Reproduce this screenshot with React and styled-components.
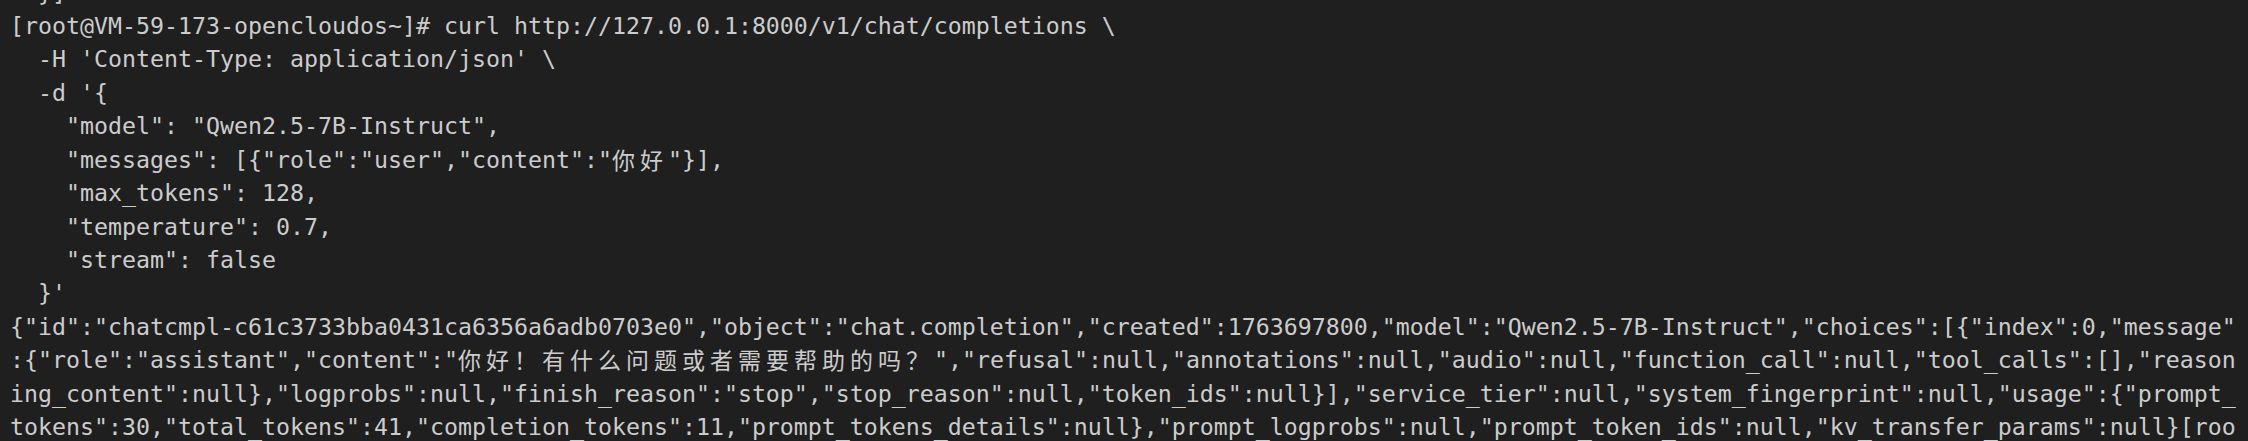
import React from "react";
import styled, { createGlobalStyle } from "styled-components";

const Global = createGlobalStyle`
  html, body {
    margin: 0;
    padding: 0;
    background: #1f1f1f;
    overflow: hidden;
  }
  #root {
    width: 2248px;
    height: 441px;
    overflow: hidden;
  }
`;

const Screen = styled.div`
  width: 2248px;
  height: 441px;
  overflow: hidden;
  background: #1f1f1f;
`;

const Terminal = styled.div`
  margin-top: -24.5px;
  padding-left: 10px;
  font-family: "DejaVu Sans Mono", "Liberation Mono", "Noto Sans CJK SC", monospace;
  font-size: 23.25px;
  line-height: 33.45px;
  color: #cccccc;
  display: flex;
  flex-direction: column;
`;

const Row = styled.div`
  height: 33.45px;
  white-space: pre;
  display: flex;
  align-items: center;
`;

const Wide = styled.span`
  display: inline-block;
  width: 28px;
  text-align: left;
  font-family: "Noto Sans CJK SC", sans-serif;
  font-size: 23px;
`;

const Cursor = styled.span`
  display: inline-block;
  width: 14px;
  height: 33.45px;
  background: #cccccc;
`;

const lines = [
  "  }]",
  "[root@VM-59-173-opencloudos~]# curl http://127.0.0.1:8000/v1/chat/completions \\",
  "  -H 'Content-Type: application/json' \\",
  "  -d '{",
  '    "model": "Qwen2.5-7B-Instruct",',
  '    "messages": [{"role":"user","content":"你好"}],',
  '    "max_tokens": 128,',
  '    "temperature": 0.7,',
  '    "stream": false',
  "  }'",
  '{"id":"chatcmpl-c61c3733bba0431ca6356a6adb0703e0","object":"chat.completion","created":1763697800,"model":"Qwen2.5-7B-Instruct","choices":[{"index":0,"message"',
  ':{"role":"assistant","content":"你好！有什么问题或者需要帮助的吗？","refusal":null,"annotations":null,"audio":null,"function_call":null,"tool_calls":[],"reason',
  'ing_content":null},"logprobs":null,"finish_reason":"stop","stop_reason":null,"token_ids":null}],"service_tier":null,"system_fingerprint":null,"usage":{"prompt_',
  'tokens":30,"total_tokens":41,"completion_tokens":11,"prompt_tokens_details":null},"prompt_logprobs":null,"prompt_token_ids":null,"kv_transfer_params":null}[roo',
];

const isWide = (ch) => /[\u3000-\u9fff\uff00-\uffef]/.test(ch);

function renderLine(text) {
  const parts = [];
  let buf = "";
  Array.from(text).forEach((ch, i) => {
    if (isWide(ch)) {
      if (buf) {
        parts.push(buf);
        buf = "";
      }
      parts.push(<Wide key={i}>{ch}</Wide>);
    } else {
      buf += ch;
    }
  });
  if (buf) parts.push(buf);
  return parts;
}

export default function App() {
  return (
    <Screen>
      <Global />
      <Terminal>
        {lines.map((l, i) => (
          <Row key={i}>{renderLine(l)}</Row>
        ))}
        <Row>
          {"t@VM-59-173-opencloudos~]# "}
          <Cursor />
        </Row>
      </Terminal>
    </Screen>
  );
}
